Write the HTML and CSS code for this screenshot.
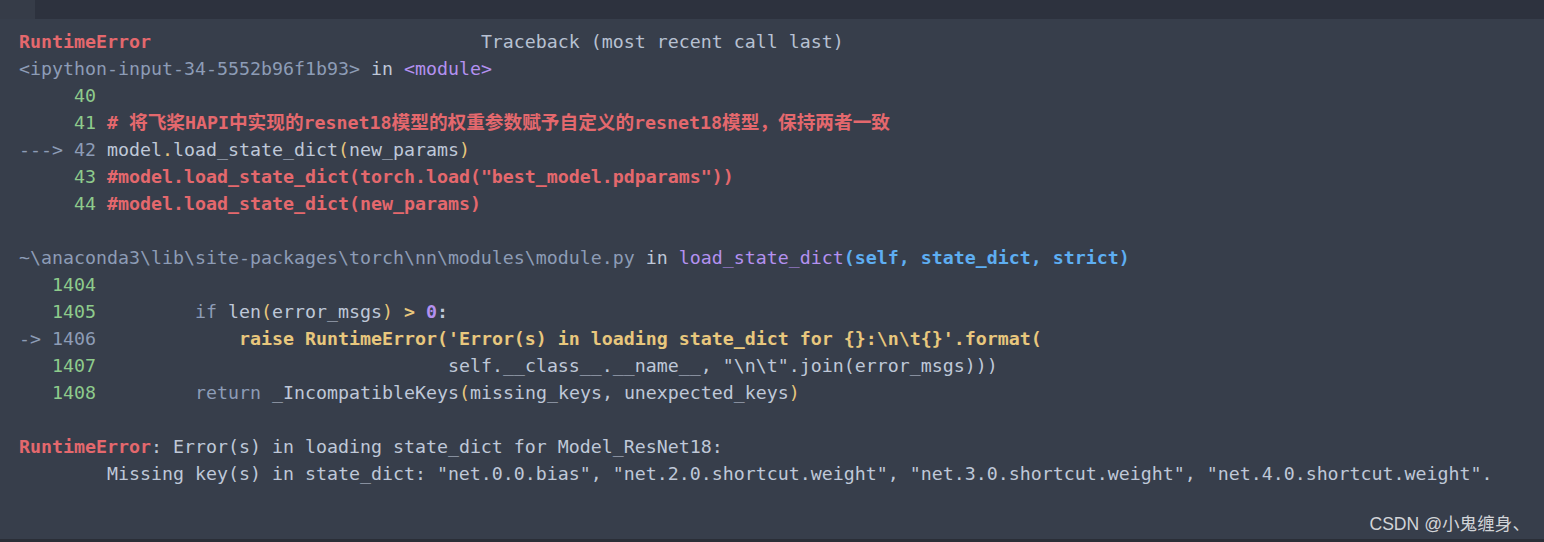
FILE: index.html
```html
<!DOCTYPE html>
<html lang="zh">
<head>
<meta charset="utf-8">
<title>Traceback</title>
<link rel="stylesheet" href="styles.css">
</head>
<body>
<div class="page">
  <div class="topbar"><div class="tab"></div></div>
  <main class="output">
<pre class="code"><span class="err b">RuntimeError</span>                              <span class="tx">Traceback (most recent call last)</span>
<span class="fn">&lt;ipython-input-34-5552b96f1b93&gt;</span> <span class="lt">in</span> <span class="pu">&lt;module&gt;</span>
     <span class="ln">40</span>
     <span class="ln">41</span> <span class="cm"># <span class="zh">将飞桨</span>HAPI<span class="zh">中实现的</span>resnet18<span class="zh">模型的权重参数赋予自定义的</span>resnet18<span class="zh">模型，保持两者一致</span></span>
<span class="ar">---&gt; 42</span> <span class="lt">model<span class="y">.</span>load_state_dict<span class="y">(</span>new_params<span class="y">)</span></span>
     <span class="ln">43</span> <span class="cm">#model.load_state_dict(torch.load("best_model.pdparams"))</span>
     <span class="ln">44</span> <span class="cm">#model.load_state_dict(new_params)</span>

<span class="fn">~\anaconda3\lib\site-packages\torch\nn\modules\module.py</span> <span class="lt">in</span> <span class="pu">load_state_dict</span><span class="bl b">(self, state_dict, strict)</span>
   <span class="ln">1404</span>
   <span class="ln">1405</span>         <span class="kw">if</span> <span class="lt">len<span class="y">(</span>error_msgs<span class="y">)</span> <span class="y b">&gt;</span> <span class="num b">0</span><span class="b">:</span></span>
<span class="ar">-&gt; 1406</span>             <span class="y b">raise RuntimeError('Error(s) in loading state_dict for {}:\n\t{}'.format(</span>
   <span class="ln">1407</span>                                <span class="lt">self.__class__.__name__, "\n\t".join(error_msgs)))</span>
   <span class="ln">1408</span>         <span class="kw">return</span> <span class="lt">_IncompatibleKeys<span class="y">(</span>missing_keys, unexpected_keys<span class="y">)</span></span>

<span class="err b">RuntimeError</span><span class="lt">: Error(s) in loading state_dict for Model_ResNet18:</span>
<span class="lt">        Missing key(s) in state_dict: "net.0.0.bias", "net.2.0.shortcut.weight", "net.3.0.shortcut.weight", "net.4.0.shortcut.weight".</span></pre>
    <div class="watermark">CSDN @小鬼缠身、</div>
  </main>
  <div class="bottombar"></div>
</div>
</body>
</html>
```

FILE: styles.css
```css
html, body {
  margin: 0;
  padding: 0;
  background: #373e4b;
}

.page {
  width: 1544px;
  height: 542px;
  display: flex;
  flex-direction: column;
  overflow: hidden;
}

.topbar {
  height: 19px;
  flex: 0 0 19px;
  background: #2d323e;
  display: flex;
}

.tab {
  width: 35px;
  background: #363c48;
}

.output {
  flex: 1;
  position: relative;
  background: #373e4b;
  padding: 9px 0 0 19px;
}

.bottombar {
  flex: 0 0 3px;
  background: #2a2e37;
}

.code {
  margin: 0;
  font-family: "DejaVu Sans Mono", "Noto Sans CJK SC", monospace;
  font-size: 18.27px;
  line-height: 27px;
  color: #bfc8d8;
  white-space: pre;
}

.zh {
  font-size: 18.66px;
  line-height: 1;
}

.b { font-weight: bold; }
.err { color: #e4686d; }
.tx { color: #b7c1d2; }
.fn { color: #8d9cb6; }
.lt { color: #bfc8d8; }
.pu { color: #b491f0; }
.ln { color: #8ecb8c; }
.cm { color: #e4686d; font-weight: bold; }
.ar { color: #8d9cb6; }
.y { color: #e8c77d; }
.bl { color: #5eaef2; }
.kw { color: #8d9cb6; }
.num { color: #b491f0; }

.watermark {
  position: absolute;
  right: 14px;
  bottom: 4px;
  font-family: "Liberation Sans", "Noto Sans CJK SC", sans-serif;
  font-size: 17.6px;
  color: #d2d4d8;
}
```
